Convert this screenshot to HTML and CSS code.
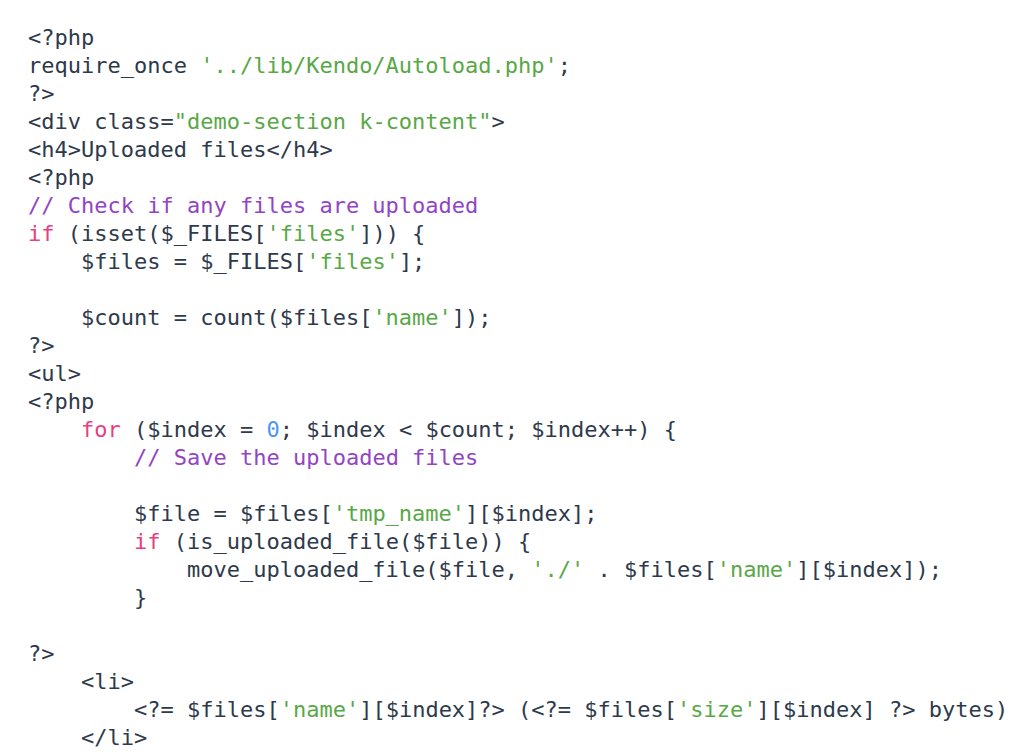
FILE: index.html
```html
<!DOCTYPE html>
<html lang="en">
<head>
<meta charset="utf-8">
<title>Upload demo</title>
<link rel="stylesheet" href="styles.css">
</head>
<body>
<pre class="code"><code>&lt;?php
require_once <span class="s">'../lib/Kendo/Autoload.php'</span>;
?&gt;
&lt;div class=<span class="s">"demo-section k-content"</span>&gt;
&lt;h4&gt;Uploaded files&lt;/h4&gt;
&lt;?php
<span class="c">// Check if any files are uploaded</span>
<span class="k">if</span> (isset($_FILES[<span class="s">'files'</span>])) {
    $files = $_FILES[<span class="s">'files'</span>];

    $count = count($files[<span class="s">'name'</span>]);
?&gt;
&lt;ul&gt;
&lt;?php
    <span class="k">for</span> ($index = <span class="n">0</span>; $index &lt; $count; $index++) {
        <span class="c">// Save the uploaded files</span>

        $file = $files[<span class="s">'tmp_name'</span>][$index];
        <span class="k">if</span> (is_uploaded_file($file)) {
            move_uploaded_file($file, <span class="s">'./'</span> . $files[<span class="s">'name'</span>][$index]);
        }

?&gt;
    &lt;li&gt;
        &lt;?= $files[<span class="s">'name'</span>][$index]?&gt; (&lt;?= $files[<span class="s">'size'</span>][$index] ?&gt; bytes)
    &lt;/li&gt;
</code></pre>
</body>
</html>
```

FILE: styles.css
```css
html, body {
  margin: 0;
  padding: 0;
  background: #ffffff;
}

.code {
  margin: 0;
  padding: 24px 0 0 28px;
  font-family: "DejaVu Sans Mono", "Liberation Mono", monospace;
  font-size: 22px;
  line-height: 28px;
  color: #2e3a4b;
  white-space: pre;
  overflow: hidden;
}

.code code {
  font-family: inherit;
}

.s {
  color: #58a846;
}

.c {
  color: #9244c4;
}

.k {
  color: #e8407e;
}

.n {
  color: #4a97f0;
}
```
